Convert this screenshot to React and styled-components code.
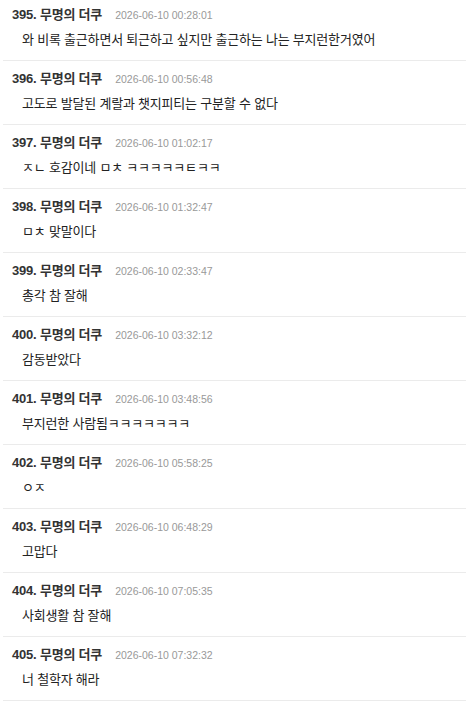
import React from 'react'
import styled, { createGlobalStyle } from 'styled-components'

const GlobalStyle = createGlobalStyle`
  body {
    margin: 0;
    background: #fff;
    font-family: "Liberation Sans", "Noto Sans CJK KR", sans-serif;
  }
`

const List = styled('ul')`
  list-style: none;
  margin: 0 1px 0 3px;
  padding: 0;
`

const Item = styled('li')`
  padding: 9px 0 10px;
  border-bottom: 1px solid #ebebeb;
  &:first-child {
    padding-top: 6px;
  }
`

const Header = styled('div')`
  display: flex;
  align-items: baseline;
  height: 18px;
  line-height: 18px;
  padding-left: 9px;
`

const Author = styled('span')`
  font-size: 13px;
  font-weight: bold;
  color: #333;
  letter-spacing: -0.2px;
`

const Date = styled('span')`
  margin-left: 13px;
  font-size: 10.5px;
  color: #999;
`

const Body = styled('div')`
  margin-top: 6px;
  padding-left: 19px;
  font-size: 13px;
  line-height: 20px;
  color: #222;
  letter-spacing: -0.2px;
`

const comments = [
  { no: 395, date: '2026-06-10 00:28:01', text: '와 비록 출근하면서 퇴근하고 싶지만 출근하는 나는 부지런한거였어' },
  { no: 396, date: '2026-06-10 00:56:48', text: '고도로 발달된 계랄과 챗지피티는 구분할 수 없다' },
  { no: 397, date: '2026-06-10 01:02:17', text: 'ㅈㄴ 호감이네 ㅁㅊ ㅋㅋㅋㅋㅋㅌㅋㅋ' },
  { no: 398, date: '2026-06-10 01:32:47', text: 'ㅁㅊ 맞말이다' },
  { no: 399, date: '2026-06-10 02:33:47', text: '총각 참 잘해' },
  { no: 400, date: '2026-06-10 03:32:12', text: '감동받았다' },
  { no: 401, date: '2026-06-10 03:48:56', text: '부지런한 사람됨ㅋㅋㅋㅋㅋㅋㅋ' },
  { no: 402, date: '2026-06-10 05:58:25', text: 'ㅇㅈ' },
  { no: 403, date: '2026-06-10 06:48:29', text: '고맙다' },
  { no: 404, date: '2026-06-10 07:05:35', text: '사회생활 참 잘해' },
  { no: 405, date: '2026-06-10 07:32:32', text: '너 철학자 해라' },
]

export default function App() {
  return (
    <>
      <GlobalStyle />
      <List>
        {comments.map((c) => (
          <Item key={c.no}>
            <Header>
              <Author>{c.no}. 무명의 더쿠</Author>
              <Date>{c.date}</Date>
            </Header>
            <Body>{c.text}</Body>
          </Item>
        ))}
      </List>
    </>
  )
}
